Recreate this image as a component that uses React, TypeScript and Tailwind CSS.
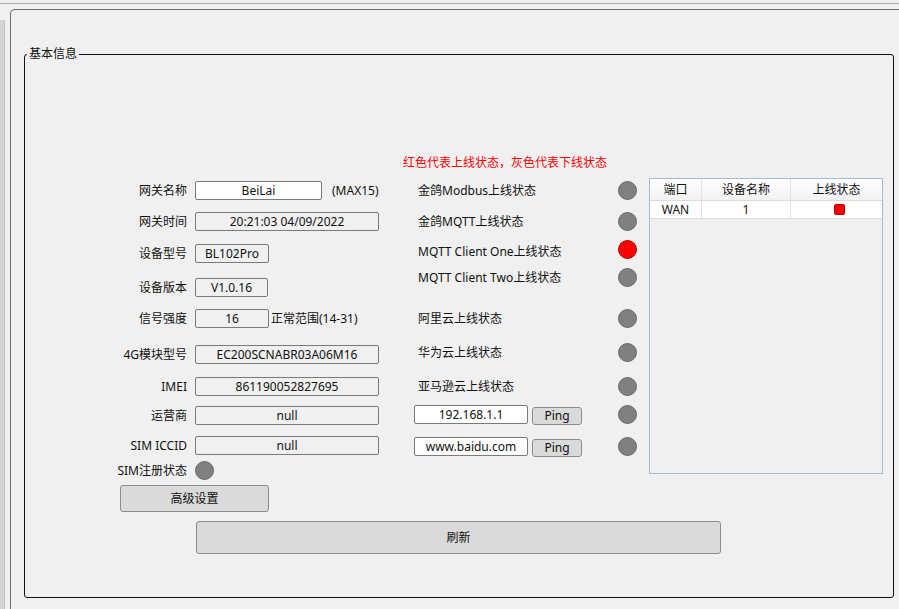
import React from 'react'

const FONT = "font-['Noto_Sans','Noto_Sans_CJK_SC',sans-serif]"

type InfoRow = {
  label: string
  value: string
  box: string
  gap: string
  white?: boolean
  after?: string
  afterGap?: string
}

const INFO_ROWS: InfoRow[] = [
  { label: '网关名称', value: 'BeiLai', box: 'w-[127px]', gap: 'mt-0', white: true, after: '(MAX15)', afterGap: 'ml-[10px]' },
  { label: '网关时间', value: '20:21:03 04/09/2022', box: 'w-[184px]', gap: 'mt-[12px]' },
  { label: '设备型号', value: 'BL102Pro', box: 'w-[74px]', gap: 'mt-[13px]' },
  { label: '设备版本', value: 'V1.0.16', box: 'w-[73px]', gap: 'mt-[15px]' },
  { label: '信号强度', value: '16', box: 'w-[74px]', gap: 'mt-[12px]', after: '正常范围(14-31)', afterGap: 'ml-[2px]' },
  { label: '4G模块型号', value: 'EC200SCNABR03A06M16', box: 'w-[184px]', gap: 'mt-[17px]' },
  { label: 'IMEI', value: '861190052827695', box: 'w-[184px]', gap: 'mt-[13px]' },
  { label: '运营商', value: 'null', box: 'w-[184px]', gap: 'mt-[10px]' },
  { label: 'SIM ICCID', value: 'null', box: 'w-[184px]', gap: 'mt-[11px]' },
]

type StatusRow = { label?: string; host?: string; online?: boolean; gap: string }

const STATUS_ROWS: StatusRow[] = [
  { label: '金鸽Modbus上线状态', gap: 'mt-[10px]' },
  { label: '金鸽MQTT上线状态', gap: 'mt-[12px]' },
  { label: 'MQTT Client One上线状态', gap: 'mt-[9px]', online: true },
  { label: 'MQTT Client Two上线状态', gap: 'mt-[9px]' },
  { label: '阿里云上线状态', gap: 'mt-[22px]' },
  { label: '华为云上线状态', gap: 'mt-[15px]' },
  { label: '亚马逊云上线状态', gap: 'mt-[15px]' },
  { host: '192.168.1.1', gap: 'mt-[9px]' },
  { host: 'www.baidu.com', gap: 'mt-[13px]' },
]

function Led({ on }: { on?: boolean }) {
  return (
    <span
      className={
        on
          ? 'block w-[19px] h-[19px] rounded-full bg-[#ff0000] border border-[#b00000]'
          : 'block w-[19px] h-[19px] rounded-full bg-[#808080] border border-[#696969]'
      }
    />
  )
}

function Field({ row }: { row: InfoRow }) {
  return (
    <div className={`flex items-center h-[19px] ${row.gap}`}>
      <span className="w-[87px] text-right shrink-0 whitespace-nowrap">{row.label}</span>
      <div
        className={`ml-[8px] h-[19px] ${row.box} flex items-center justify-center border border-[#7a7a7a] rounded-[2px] ${
          row.white ? 'bg-white' : 'bg-[#f0f0f0]'
        }`}
      >
        {row.value}
      </div>
      {row.after && <span className={`${row.afterGap} whitespace-nowrap`}>{row.after}</span>}
    </div>
  )
}

function StatusLine({ row }: { row: StatusRow }) {
  return (
    <div className={`flex items-center justify-between h-[19px] ${row.gap}`}>
      {row.label ? (
        <span className={`pl-[15px] whitespace-nowrap ${row.online ? 'translate-y-[2px]' : ''}`}>{row.label}</span>
      ) : (
        <div className="flex items-center pl-[11px]">
          <div className="w-[114px] h-[19px] bg-white border border-[#7a7a7a] rounded-[2px] flex items-center justify-center">
            {row.host}
          </div>
          <button className="ml-[4px] w-[50px] h-[18px] mt-[2px] bg-[#dadada] border border-[#8c8c8c] rounded-[3px] flex items-center justify-center">
            Ping
          </button>
        </div>
      )}
      <Led on={row.online} />
    </div>
  )
}

function PortTable() {
  return (
    <div className="mt-[23px] w-[234px] h-[296px] border border-[#a5bcd4] bg-[#f0f0f0]">
      <div className="flex h-[22px] bg-gradient-to-b from-white to-[#f2f2f2] border-b border-[#dcdcdc]">
        <div className="w-[52px] flex items-center justify-center border-r border-[#e2e2e2]">端口</div>
        <div className="w-[89px] flex items-center justify-center border-r border-[#e2e2e2]">设备名称</div>
        <div className="flex-1 flex items-center justify-center">上线状态</div>
      </div>
      <div className="flex h-[18px] bg-white border-b border-[#dcdcdc]">
        <div className="w-[52px] flex items-center justify-center border-r border-[#e2e2e2]">WAN</div>
        <div className="w-[89px] flex items-center justify-center border-r border-[#e2e2e2]">1</div>
        <div className="flex-1 flex items-center justify-center">
          <span className="block ml-[6px] w-[11px] h-[11px] rounded-[2px] bg-[#ff0000] border border-[#b00000]" />
        </div>
      </div>
    </div>
  )
}

export default function App() {
  return (
    <div className={`w-[899px] h-[609px] bg-[#f0f0f0] overflow-hidden flex flex-col text-[12px] leading-[16px] text-[#111] ${FONT}`}>
      <div className="h-[4px] shrink-0 border-b border-[#acacac]" />
      <div className="flex flex-1">
        <div className="w-[5px] mt-[16px] bg-[#d4d4d4] border-r border-[#c4c4c4]" />
        <div className="ml-[5px] mt-[5px] flex-1 border-l border-t border-[#707070] rounded-tl-[5px] pl-[13px] pt-[44px]">
          <div className="relative w-[870px] h-[544px] border border-[#111] rounded-[3px]">
            <span className="absolute -top-[9px] left-[2px] bg-[#f0f0f0] px-[2px] leading-[16px]">基本信息</span>

            <div className="flex items-start pt-[100px] pl-[75px]">
              {/* left: device info */}
              <div className="w-[303px] mt-[26px] flex flex-col">
                {INFO_ROWS.map(r => (
                  <Field key={r.label} row={r} />
                ))}
                <div className="flex items-center h-[19px] mt-[6px]">
                  <span className="w-[87px] text-right whitespace-nowrap">SIM注册状态</span>
                  <span className="ml-[8px]">
                    <Led />
                  </span>
                </div>
                <button className="mt-[5px] ml-[20px] w-[149px] h-[27px] bg-[#dadada] border border-[#8c8c8c] rounded-[3px] flex items-center justify-center">
                  高级设置
                </button>
              </div>

              {/* middle: online status */}
              <div className="w-[234px] flex flex-col">
                <p className="text-[#ff0000] h-[16px] whitespace-nowrap">红色代表上线状态，灰色代表下线状态</p>
                {STATUS_ROWS.map(r => (
                  <StatusLine key={r.label ?? r.host} row={r} />
                ))}
              </div>

              <div className="ml-[12px]">
                <PortTable />
              </div>
            </div>

            <button className="mt-[9px] ml-[171px] w-[525px] h-[33px] bg-[#dadada] border border-[#8c8c8c] rounded-[3px] flex items-center justify-center">
              刷新
            </button>
          </div>
        </div>
      </div>
    </div>
  )
}
